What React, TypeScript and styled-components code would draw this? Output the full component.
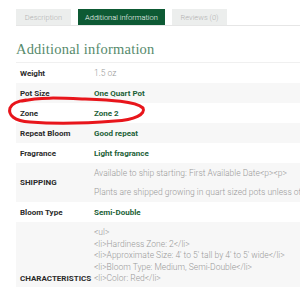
import React from 'react';
import styled, { createGlobalStyle } from 'styled-components';

const GlobalStyle = createGlobalStyle`
    html, body {
        margin: 0;
        padding: 0;
        background: #fff;
    }
    body {
        font-family: Roboto, "Liberation Sans", sans-serif;
    }
`;

const Page = styled.div`
    position: relative;
    width: 300px;
    height: 289px;
    overflow: hidden;
    padding-left: 16px;
    box-sizing: border-box;
`;

const Tabs = styled.div`
    display: flex;
    gap: 7px;
    padding-top: 9px;
    border-bottom: 1px solid #e6e6e6;
    width: 400px;
`;

const Tab = styled.div<{ $active?: boolean; $width: number }>`
    height: 16px;
    width: ${p => p.$width}px;
    display: flex;
    align-items: center;
    justify-content: center;
    font-size: 7.5px;
    font-weight: 300;
    background: ${p => (p.$active ? '#0d5a34' : '#eceeed')};
    color: ${p => (p.$active ? '#ffffff' : '#b3b3b3')};
    margin-bottom: ${p => (p.$active ? '-1px' : '0')};
`;

const Heading = styled.h2`
    margin: 11px 0 0;
    height: 25px;
    font-family: "Liberation Serif", serif;
    font-weight: 400;
    font-size: 14.5px;
    letter-spacing: 0.2px;
    line-height: 25px;
    color: #568a6c;
    border-bottom: 1px solid #f0f0f0;
    width: 400px;
`;

const Table = styled.div`
    width: 400px;
    font-size: 8px;
`;

const Row = styled.div<{ $striped?: boolean }>`
    display: grid;
    grid-template-columns: 78px 1fr;
    align-items: center;
    min-height: 20px;
    background: ${p => (p.$striped ? '#f7f7f7' : '#ffffff')};
`;

const Label = styled.div`
    padding-left: 4px;
    font-weight: 700;
    color: #2b2b2b;
    white-space: nowrap;
`;

const LabelBottom = styled(Label)`
    align-self: end;
    padding-bottom: 4px;
`;

const Value = styled.div<{ $green?: boolean }>`
    font-size: ${p => (p.$green ? 8 : 8.5)}px;
    font-weight: ${p => (p.$green ? 700 : 300)};
    color: ${p => (p.$green ? '#1c6138' : '#9a9a9a')};
    white-space: nowrap;
`;

const Lines = styled.div<{ $pad: string; $gap: number }>`
    display: flex;
    flex-direction: column;
    font-size: 8.5px;
    color: #9a9a9a;
    font-weight: 300;
    white-space: nowrap;
    padding: ${p => p.$pad};
    gap: ${p => p.$gap}px;
`;

const Marker = styled.svg`
    position: absolute;
    left: 0;
    top: 0;
    pointer-events: none;
`;

export default function App() {
    return (
        <Page>
            <GlobalStyle />
            <Tabs>
                <Tab $width={55}>Description</Tab>
                <Tab $width={87} $active>Additional information</Tab>
                <Tab $width={55}>Reviews (0)</Tab>
            </Tabs>

            <Heading>Additional information</Heading>

            <Table>
                <Row>
                    <Label>Weight</Label>
                    <Value>1.5 oz</Value>
                </Row>
                <Row $striped>
                    <Label>Pot Size</Label>
                    <Value $green>One Quart Pot</Value>
                </Row>
                <Row>
                    <Label>Zone</Label>
                    <Value $green>Zone 2</Value>
                </Row>
                <Row $striped>
                    <Label>Repeat Bloom</Label>
                    <Value $green>Good repeat</Value>
                </Row>
                <Row>
                    <Label>Fragrance</Label>
                    <Value $green>Light fragrance</Value>
                </Row>
                <Row $striped>
                    <Label>SHIPPING</Label>
                    <Lines $pad="5px 0 5px" $gap={9}>
                        <span>Available to ship starting: First Available Date&lt;p&gt;&lt;p&gt;</span>
                        <span>Plants are shipped growing in quart sized pots unless otherwise noted.</span>
                    </Lines>
                </Row>
                <Row>
                    <Label>Bloom Type</Label>
                    <Value $green>Semi-Double</Value>
                </Row>
                <Row $striped>
                    <LabelBottom>CHARACTERISTICS</LabelBottom>
                    <Lines $pad="5px 0 4px" $gap={1.5}>
                        <span>&lt;ul&gt;</span>
                        <span>&lt;li&gt;Hardiness Zone: 2&lt;/li&gt;</span>
                        <span>&lt;li&gt;Approximate Size: 4' to 5' tall by 4' to 5' wide&lt;/li&gt;</span>
                        <span>&lt;li&gt;Bloom Type: Medium, Semi-Double&lt;/li&gt;</span>
                        <span>&lt;li&gt;Color: Red&lt;/li&gt;</span>
                    </Lines>
                </Row>
            </Table>

            <Marker width="300" height="289" viewBox="0 0 300 289">
                <path
                    d="M22 101 C40 97 60 98 85 99 C110 100 135 101 143 108 C146 114 135 120 115 121 C90 123 55 124 30 122 C14 121 8 115 10 108 C12 103 18 101 26 100"
                    fill="none"
                    stroke="#e8151b"
                    strokeWidth="3"
                    strokeLinecap="round"
                />
            </Marker>
        </Page>
    );
}
